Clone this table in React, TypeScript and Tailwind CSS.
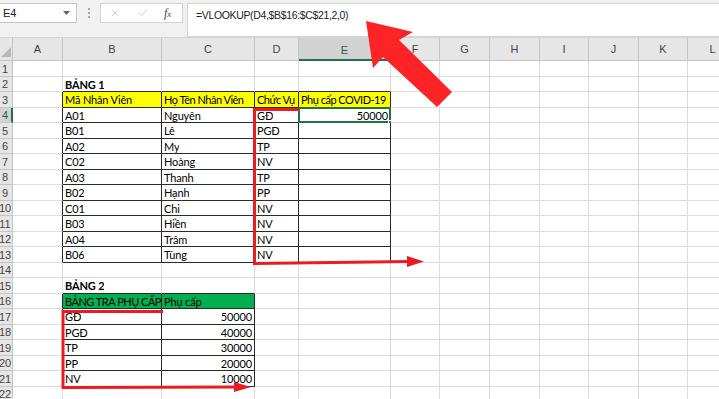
import { X, Check } from 'lucide-react'

const GRID = 'grid grid-cols-[13px_50px_99px_93px_44px_92px_49px_50px_50px_49px_50px_49px_50px]'
const LETTERS = ['A', 'B', 'C', 'D', 'E', 'F', 'G', 'H', 'I', 'J', 'K', 'L']

type Cell = { t: string; bold?: boolean; num?: boolean; tight?: boolean }

// cells keyed by row, then column index (1 = A)
const sheet: Record<number, Record<number, Cell>> = {
  2: { 2: { t: 'BẢNG 1', bold: true } },
  3: {
    2: { t: 'Mã Nhân Viên' },
    3: { t: 'Họ Tên Nhân Viên', tight: true },
    4: { t: 'Chức Vụ', tight: true },
    5: { t: 'Phụ cấp COVID-19', tight: true },
  },
  15: { 2: { t: 'BẢNG 2', bold: true } },
  16: { 2: { t: 'BẢNG TRA PHỤ CẤP', tight: true }, 3: { t: 'Phụ cấp' } },
}

const staff = [
  ['A01', 'Nguyên', 'GĐ'],
  ['B01', 'Lê', 'PGĐ'],
  ['A02', 'My', 'TP'],
  ['C02', 'Hoàng', 'NV'],
  ['A03', 'Thanh', 'TP'],
  ['B02', 'Hạnh', 'PP'],
  ['C01', 'Chi', 'NV'],
  ['B03', 'Hiền', 'NV'],
  ['A04', 'Trâm', 'NV'],
  ['B06', 'Tùng', 'NV'],
]
staff.forEach(([ma, ten, cv], i) => {
  sheet[4 + i] = { 2: { t: ma }, 3: { t: ten }, 4: { t: cv } }
})
sheet[4][5] = { t: '50000', num: true }

const allowance = [
  ['GĐ', '50000'],
  ['PGĐ', '40000'],
  ['TP', '30000'],
  ['PP', '20000'],
  ['NV', '10000'],
]
allowance.forEach(([cv, tien], i) => {
  sheet[17 + i] = { 2: { t: cv }, 3: { t: tien, num: true } }
})

const inT1 = (c: number, r: number) => c >= 2 && c <= 5 && r >= 3 && r <= 13
const inT2 = (c: number, r: number) => c >= 2 && c <= 3 && r >= 16 && r <= 21
const inTable = (c: number, r: number) => inT1(c, r) || inT2(c, r)

function cellBg(c: number, r: number) {
  if (r === 3 && c >= 2 && c <= 5) return 'bg-[#ffff00]'
  if (r === 16 && c >= 2 && c <= 3) return 'bg-[#00b050]'
  return 'bg-white'
}

function FormulaBar() {
  return (
    <div className="flex h-[38px] items-start border-b border-[#d4d4d4] bg-[#f1f1f1] pt-[3px] leading-[14px]">
      <div className="flex h-[20px] w-[77px] items-center justify-between border border-l-0 border-[#c6c6c6] bg-white pl-[3px] pr-[6px] text-[11px] text-[#222]">
        <span>E4</span>
        <svg width="7" height="4" viewBox="0 0 7 4">
          <path d="M0 0 L7 0 L3.5 4 Z" fill="#666" />
        </svg>
      </div>
      <div className="flex h-[20px] w-[23px] flex-col items-center justify-center gap-[2px]">
        <span className="h-[2px] w-[2px] bg-[#a8a8a8]" />
        <span className="h-[2px] w-[2px] bg-[#a8a8a8]" />
        <span className="h-[2px] w-[2px] bg-[#a8a8a8]" />
      </div>
      <div className="flex h-[20px] w-[83px] items-center border border-[#d4d4d4] bg-white">
        <X size={12} strokeWidth={1.2} className="ml-[8px] text-[#b4b4b4]" />
        <Check size={12} strokeWidth={1.2} className="ml-[16px] text-[#b4b4b4]" />
        <span className="ml-[15px] font-['Liberation_Serif',serif] text-[12px] italic text-[#444]">
          f<span className="text-[9px]">x</span>
        </span>
      </div>
      <div className="ml-[4px] h-[34px] flex-1 border border-r-0 border-[#d4d4d4] bg-white pl-[8px] pt-[4px] text-[10.5px] tracking-[-0.35px] text-[#222]">
        =VLOOKUP(D4,$B$16:$C$21,2,0)
      </div>
    </div>
  )
}

function HeaderRow() {
  return (
    <div className={`${GRID} h-[23px] grid-rows-[23px]`}>
      <div className="relative border-b border-r border-[#c4c4c4] bg-[#e6e6e6]">
        <svg className="absolute bottom-[3px] right-[1px]" width="10" height="10" viewBox="0 0 10 10">
          <path d="M10 0 L10 10 L0 10 Z" fill="#b9b9b9" />
        </svg>
      </div>
      {LETTERS.map((l) =>
        l === 'E' ? (
          <div
            key={l}
            className="flex items-center justify-center border-b-2 border-r border-b-[#217346] border-r-[#c4c4c4] bg-[#d2d2d2] pt-[2px] text-[11px] text-[#2c5e3f]"
          >
            {l}
          </div>
        ) : (
          <div
            key={l}
            className="flex items-center justify-center border-b border-r border-[#c4c4c4] bg-[#e6e6e6] text-[11px] text-[#444]"
          >
            {l}
          </div>
        )
      )}
    </div>
  )
}

function SheetRow({ r }: { r: number }) {
  const h = r % 2 === 1 ? 'h-[16px] grid-rows-[16px]' : 'h-[15px] grid-rows-[15px]'
  const selected = r === 4
  return (
    <div className={`${GRID} ${h}`}>
      {selected ? (
        <div className="flex items-center justify-center border-b border-r-2 border-b-[#c4c4c4] border-r-[#217346] bg-[#d2d2d2] pr-[1px] text-[11px] text-[#2c5e3f]">
          {r}
        </div>
      ) : (
        <div className="flex items-center justify-center border-b border-r border-[#c4c4c4] bg-[#e6e6e6] pr-[2px] text-[11px] text-[#444]">
          {r}
        </div>
      )}
      {LETTERS.map((_, i) => {
        const c = i + 1
        const cell = sheet[r]?.[c]
        const darkR = inTable(c, r) || inTable(c + 1, r)
        const darkB = inTable(c, r) || inTable(c, r + 1)
        return (
          <div
            key={c}
            className={`relative flex min-w-0 items-center whitespace-nowrap border-b border-r font-['Lato',sans-serif] text-[11px] text-black ${cellBg(c, r)} ${
              darkR ? 'border-r-[#2a2a2a]' : 'border-r-[#dcdcdc]'
            } ${darkB ? 'border-b-[#2a2a2a]' : 'border-b-[#dcdcdc]'} ${cell?.num ? 'justify-end pr-[2px]' : 'pl-[2px]'} ${
              cell?.bold ? 'font-bold' : ''
            } ${cell?.tight ? 'tracking-[-0.5px]' : 'tracking-[-0.15px]'}`}
          >
            {cell && <span className="block min-w-0 overflow-hidden pt-[1px]">{cell.t}</span>}
            {selected && c === 5 && (
              <>
                <div className="pointer-events-none absolute -left-[1px] -top-[1px] bottom-[-1px] right-[-1px] border-2 border-[#217346]" />
                <div className="absolute -bottom-[3px] -right-[3px] h-[5px] w-[5px] border border-white bg-[#217346]" />
              </>
            )}
          </div>
        )
      })}
    </div>
  )
}

function Annotations() {
  return (
    <svg className="pointer-events-none absolute left-0 top-0" width="719" height="399" viewBox="0 0 719 399">
      <polygon points="366,21 413,32 399,40 452,92 437,107 383,57 373,68" fill="#fd2326" />
      <polyline
        points="299,109.5 254.5,109.5 254.5,263.5 410,261.5"
        fill="none"
        stroke="#e81c22"
        strokeWidth="3"
      />
      <polygon points="407,256 424,261.5 407,267" fill="#e81c22" />
      <polyline
        points="163,311.5 63,311.5 63,387.5 238,387"
        fill="none"
        stroke="#e81c22"
        strokeWidth="3"
      />
      <polygon points="234,382 251,387 234,392" fill="#e81c22" />
    </svg>
  )
}

export default function App() {
  const rows = Array.from({ length: 22 }, (_, i) => i + 1)
  return (
    <div className="relative h-[399px] w-[719px] overflow-hidden bg-white font-['Liberation_Sans',Arial,sans-serif] leading-[12px]">
      <FormulaBar />
      <HeaderRow />
      {rows.map((r) => (
        <SheetRow key={r} r={r} />
      ))}
      <Annotations />
    </div>
  )
}
